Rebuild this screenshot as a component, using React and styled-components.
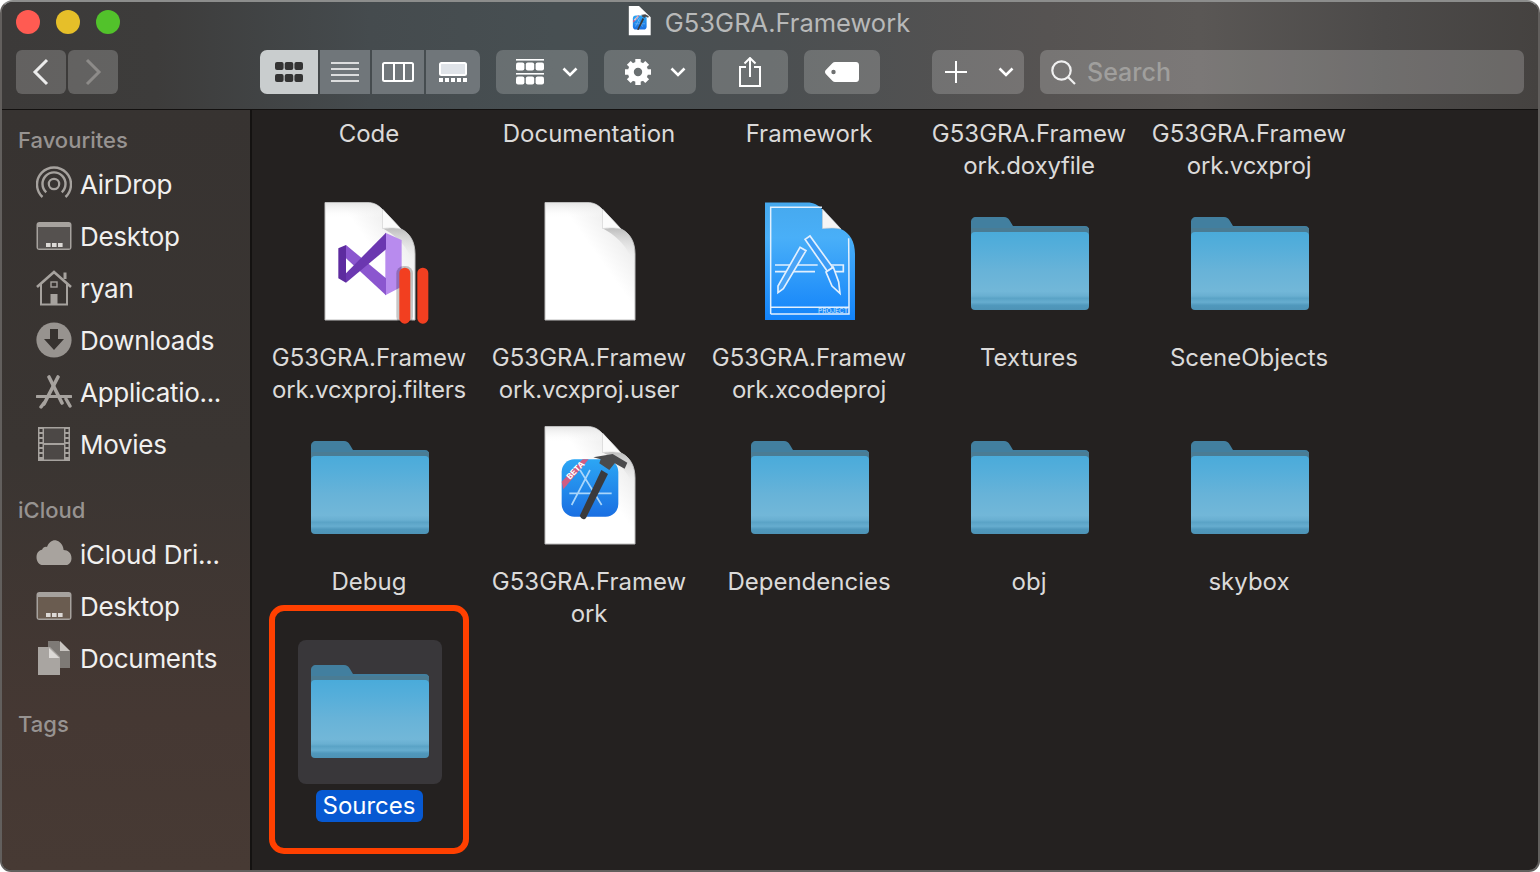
import styled, { createGlobalStyle } from "styled-components";

const GlobalStyle = createGlobalStyle`
  html, body {
    margin: 0;
    background: #fff;
    font-family: Inter, "Liberation Sans", sans-serif;
  }
  * { box-sizing: border-box; }
`;

const DOC_PATH = "M28 10.5H70C77 10.5 81 13 85 17L104 37C113 41 118 50 118 62V128H28Z";

const Doc = ({ children }) => (
  <svg width="144" height="144" viewBox="1 0 144 144">
    <defs>
      <linearGradient id="docShade" x1="1" y1="0" x2="0.55" y2="0.42">
        <stop offset="0" stopColor="#d2d2d2" />
        <stop offset="0.55" stopColor="#f0f0f0" />
        <stop offset="1" stopColor="#ffffff" />
      </linearGradient>
      <linearGradient id="docTop" x1="0" y1="0" x2="0" y2="1">
        <stop offset="0" stopColor="#e6e6e6" />
        <stop offset="1" stopColor="#ffffff" stopOpacity="0" />
      </linearGradient>
      <linearGradient id="docCurl" x1="0" y1="0" x2="0" y2="1">
        <stop offset="0" stopColor="#bdbdbd" />
        <stop offset="1" stopColor="#ffffff" stopOpacity="0" />
      </linearGradient>
    </defs>
    <path d={DOC_PATH} fill="url(#docShade)" stroke="#bdbdbd" strokeWidth="1" />
    <path d="M29 11H70C77 11 81 13 85 17V26H29Z" fill="url(#docTop)" />
    <path d="M86 36.5C98 35 104 37 104 37C113 41 117.5 50 117.5 62V74C112 56 100 44 86 36.5Z" fill="url(#docCurl)" />
    <path d="M85.5 17L104 37C98 35.5 91 36 85.5 36.5Z" fill="#fbfbfb" stroke="#cfcfcf" strokeWidth="0.6" />
    {children}
  </svg>
);

const VsDoc = () => (
  <Doc>
    <g transform="translate(13 -2) scale(0.3333)">
      <polygon points="226,128 275,150 275,290 226,316" fill="#b88bee" />
      <polygon points="108,165 228,265 228,316 108,205" fill="#8b56cf" />
      <polygon points="108,278 228,178 228,128 108,250" fill="#6b37b0" />
      <polygon points="85,175 108,165 108,278 85,265" fill="#5d2b9f" />
      <rect x="259" y="228" width="50" height="174" rx="22" fill="#000" opacity="0.22" />
      <rect x="268" y="233" width="33" height="168" rx="16" fill="#f23f20" />
      <rect x="322" y="233" width="33" height="168" rx="16" fill="#f23f20" />
    </g>
  </Doc>
);

const ProjectDoc = () => (
  <svg width="144" height="144" viewBox="1 0 144 144">
    <defs>
      <linearGradient id="projBlue" x1="0" y1="0" x2="0" y2="1">
        <stop offset="0" stopColor="#46a9ee" />
        <stop offset="0.3" stopColor="#49aff8" />
        <stop offset="1" stopColor="#1283fa" />
      </linearGradient>
    </defs>
    <path d={DOC_PATH} fill="url(#projBlue)" />
    <g transform="translate(13 -2) scale(0.3333)" fill="none" stroke="#e2f0fe" strokeWidth="4.5">
      <path d="M62 372V52H216M296 145C296 160 297 200 297 372H62M62 352H296" />
      <path d="M75 225H203M222 225H280V245H236M195 245H75Z" strokeWidth="5" />
      <path d="M150 172L168 182L100 296L84 308L84 288Z" fill="#49a4f7" strokeWidth="5" />
      <path d="M165 148L180 138L248 232L232 244Z" fill="#3d9df6" strokeWidth="5" />
      <path d="M228 246L250 232L266 276L270 310L246 288Z" fill="#2b92f7" strokeWidth="5" />
    </g>
    <path d="M85.5 17L104 37C98 35.5 91 36 85.5 36.5Z" fill="#f5f5f5" stroke="#cfcfcf" strokeWidth="0.6" />
    <text x="96" y="121" textAnchor="middle" fontSize="6.5" fill="#d8ecff" fontFamily="Inter, sans-serif">PROJECT</text>
  </svg>
);

const XcodeArt = () => (
  <g transform="translate(13 4) scale(0.3333)">
    <defs>
      <linearGradient id="xcBlue" x1="0" y1="0" x2="0" y2="1">
        <stop offset="0" stopColor="#2ca6f4" />
        <stop offset="1" stopColor="#1a6fe2" />
      </linearGradient>
    </defs>
    <rect x="95" y="118" width="170" height="172" rx="38" fill="url(#xcBlue)" />
    <path d="M95 185L158 118H176L100 208Z" fill="#cf5c83" />
    <text x="0" y="0" transform="translate(120 180) rotate(-46)" fontSize="25" fontWeight="700" fill="#fff" fontFamily="Inter, sans-serif">BETA</text>
    <g fill="none" stroke="#a9d6fb" strokeWidth="5">
      <path d="M180 150L125 255M150 150L215 255M118 220H245" />
    </g>
    <path d="M214 150L234 162L168 294C162 302 150 296 150 286Z" fill="#3a3a3c" />
    <path d="M190 112L248 102L292 128L284 146L254 130L238 150L208 130L212 118Z" fill="#4a4a4c" />
  </g>
);

const XcodeDoc = () => (
  <Doc>
    <XcodeArt />
  </Doc>
);

const TitleDoc = () => (
  <svg width="35" height="35" viewBox="0 0 144 144">
    <path d="M28 4H70L118 50V124H28Z" fill="#fff" />
    <XcodeArt />
  </svg>
);

const Folder = () => (
  <svg width="144" height="144" viewBox="1 0 144 144">
    <defs>
      <linearGradient id="folderFront" x1="0" y1="0" x2="0" y2="1">
        <stop offset="0" stopColor="#4aabda" />
        <stop offset="0.2" stopColor="#55aeda" />
        <stop offset="0.5" stopColor="#68b3d8" />
        <stop offset="0.76" stopColor="#72b7d8" />
        <stop offset="0.82" stopColor="#69afd1" />
        <stop offset="0.85" stopColor="#5aa3c6" />
        <stop offset="0.9" stopColor="#66adcf" />
        <stop offset="0.94" stopColor="#5098bc" />
        <stop offset="1" stopColor="#4e93b6" />
      </linearGradient>
    </defs>
    <path d="M14 30C14 27 16 25 19 25H47C50 25 51 26 53 29L56 34H128C131 34 132 36 132 38V60H14Z" fill="#427f9f" />
    <path d="M14 36H132V44H14Z" fill="#4a7c94" />
    <rect x="14" y="40" width="118" height="78" rx="4" fill="url(#folderFront)" />
  </svg>
);

const ICONS = { vs: VsDoc, doc: Doc, project: ProjectDoc, xcode: XcodeDoc, folder: Folder };

const Chevron = styled.svg.attrs({ width: 16, height: 10, viewBox: "0 0 16 10" })`
  fill: none;
  stroke: #fff;
  stroke-width: 2.6;
`;
const Down = () => (
  <Chevron>
    <path d="M1.5 1.5L8 8L14.5 1.5" />
  </Chevron>
);

const GridGlyph = () => (
  <svg width="28" height="20" viewBox="0 0 28 20" fill="#333">
    {[0, 1].map((r) =>
      [0, 1, 2].map((c) => <rect key={`${r}${c}`} x={c * 9.7} y={r * 12} width="8.6" height="8" rx="2" />)
    )}
  </svg>
);

const ListGlyph = () => (
  <svg width="28" height="20" viewBox="0 0 28 20" stroke="#fff" strokeWidth="1.6">
    <path d="M0 1H28M0 7H28M0 13H28M0 19H28" />
  </svg>
);

const ColumnGlyph = () => (
  <svg width="32" height="20" viewBox="0 0 32 20" fill="none" stroke="#fff" strokeWidth="2">
    <rect x="1" y="1" width="30" height="18" rx="1.5" />
    <path d="M12 1V19M22 1V19" />
  </svg>
);

const GalleryGlyph = () => (
  <svg width="28" height="20" viewBox="0 0 28 20">
    <rect x="1" y="1" width="26" height="12" rx="1.5" fill="#dfe3e8" stroke="#fff" strokeWidth="2" />
    {[0, 1, 2, 3, 4].map((i) => (
      <rect key={i} x={i * 6} y="16" width="4" height="4" fill="#fff" />
    ))}
  </svg>
);

const ArrangeGlyph = () => (
  <svg width="28" height="26" viewBox="0 0 28 26" fill="#fff">
    <rect y="0" width="28" height="1.6" />
    {[0, 1].map((r) =>
      [0, 1, 2].map((c) => <rect key={`${r}${c}`} x={c * 9.8} y={3.5 + r * 14} width="8.4" height="8" rx="2" />)
    )}
    <rect y="14" width="28" height="1.6" />
  </svg>
);

const GearGlyph = () => (
  <svg width="28" height="28" viewBox="0 0 28 28" fill="none" stroke="#fff">
    <circle cx="14" cy="14" r="7.2" strokeWidth="6" />
    {[0, 45, 90, 135, 180, 225, 270, 315].map((a) => (
      <path key={a} d="M14 6V1" strokeWidth="5.4" transform={`rotate(${a} 14 14)`} />
    ))}
  </svg>
);

const ShareGlyph = () => (
  <svg width="22" height="30" viewBox="0 0 22 30" fill="none" stroke="#fff" strokeWidth="2">
    <path d="M7 10H1V29H21V10H15" />
    <path d="M11 20V1.5M5.5 6.5L11 1L16.5 6.5" />
  </svg>
);

const TagGlyph = () => (
  <svg width="34" height="20" viewBox="0 0 34 20">
    <path
      fillRule="evenodd"
      fill="#fff"
      d="M10 0H31C32.7 0 34 1.3 34 3V17C34 18.7 32.7 20 31 20H10C9 20 8.3 19.7 7.6 19L0.8 12C-0.3 10.8 -0.3 9.2 0.8 8L7.6 1C8.3 0.3 9 0 10 0ZM8.5 7.8A2.2 2.2 0 1 0 8.5 12.2A2.2 2.2 0 1 0 8.5 7.8Z"
    />
  </svg>
);

const PlusGlyph = () => (
  <svg width="24" height="24" viewBox="0 0 24 24" stroke="#fff" strokeWidth="2">
    <path d="M12 1V23M1 12H23" />
  </svg>
);

const SearchGlyph = () => (
  <svg width="25" height="25" viewBox="0 0 25 25" fill="none" stroke="#f0f0f0" strokeWidth="2.2">
    <circle cx="10.5" cy="10.5" r="9.2" />
    <path d="M17 17L24 24" />
  </svg>
);

const SIDE = "#a6a29e";

const AirDropIcon = () => (
  <svg width="36" height="36" viewBox="0 0 36 36" fill="none" stroke={SIDE} strokeWidth="2.4">
    <path d="M6.5 31A17 17 0 1 1 29.5 31" />
    <path d="M10.2 26.3A11.5 11.5 0 1 1 25.8 26.3" />
    <circle cx="18" cy="18" r="5.2" strokeWidth="2.2" />
  </svg>
);

const DesktopIcon = ({ screen = "#55514f" }) => (
  <svg width="36" height="36" viewBox="0 0 36 36">
    <rect x="0.5" y="4" width="35" height="28" rx="3" fill={SIDE} />
    <rect x="2" y="9" width="32" height="21.5" fill={screen} />
    {[10, 16, 22].map((x) => (
      <rect key={x} x={x} y="25" width="4.6" height="4" fill="#dcd9d6" />
    ))}
  </svg>
);

const HomeIcon = () => (
  <svg width="36" height="36" viewBox="0 0 36 36" fill="none" stroke={SIDE} strokeWidth="2">
    <path d="M1 17L18 2L35 17" strokeWidth="2.6" />
    <path d="M29 9V2.5" strokeWidth="3" />
    <path d="M5 14V34.5H31V14" />
    <rect x="15" y="12" width="6" height="5" strokeWidth="1.4" />
    <rect x="14.5" y="24" width="7" height="10.5" fill={SIDE} stroke="none" />
  </svg>
);

const DownloadsIcon = () => (
  <svg width="36" height="36" viewBox="0 0 36 36">
    <circle cx="18" cy="18" r="17.6" fill="#97938f" />
    <path d="M14 7H22V17H28L18 28L8 17H14Z" fill="#36322f" />
  </svg>
);

const AppsIcon = () => (
  <svg width="36" height="34" viewBox="0 0 36 34" fill="none" stroke={SIDE} strokeLinecap="round">
    <path d="M13 2L26 28" strokeWidth="3.6" />
    <path d="M22 2L8 29" strokeWidth="3.6" />
    <path d="M1 21.5H35" strokeWidth="3" />
    <path d="M30 24L34 31" strokeWidth="3.4" />
    <path d="M5 32L8 28" strokeWidth="3.4" />
  </svg>
);

const MoviesIcon = () => (
  <svg width="36" height="36" viewBox="0 0 36 36">
    <rect x="2" y="1" width="32" height="34" fill={SIDE} />
    <rect x="8" y="2.5" width="20" height="14.5" fill="#4c4846" />
    <rect x="8" y="19" width="20" height="14.5" fill="#4c4846" />
    {[3, 8, 13, 18, 23, 28].map((y) => (
      <g key={y} fill="#3b3735">
        <rect x="3.5" y={y} width="3" height="3" />
        <rect x="29.5" y={y} width="3" height="3" />
      </g>
    ))}
  </svg>
);

const CloudIcon = () => (
  <svg width="36" height="36" viewBox="0 0 36 36">
    <path
      transform="translate(0 -9.75) scale(1 1.25)"
      d="M7 31C3 31 0.5 28 0.5 24.7C0.5 21.5 3 19 6 18.8C7 16.8 9.2 16 11 16.6C13 12.5 17 10.5 21 11.5C25 12.5 27.5 16 27.6 19C32 19 35.5 21.5 35.5 25.5C35.5 29 32.5 31 30 31Z"
      fill="#a8a39e"
    />
  </svg>
);

const DocumentsIcon = () => (
  <svg width="36" height="36" viewBox="0 0 36 36">
    <path d="M12 1H23L34 11V28H12Z" fill="#7e7a76" />
    <path d="M24 1L34 11H24Z" fill="#c9c5c1" />
    <path d="M2 7H14L24 17V35H2Z" fill="#a9a5a1" />
    <path d="M13 8L23.5 18H13Z" fill="#dcd9d6" />
  </svg>
);

const Window = styled.div`
  width: 1540px;
  height: 872px;
  display: flex;
  flex-direction: column;
  overflow: hidden;
  border: 2px solid #625f5d;
  border-top-color: #8c8d8c;
  border-radius: 13px 13px 11px 11px;
  background: #242120;
`;

const Toolbar = styled.header`
  flex: none;
  height: 108px;
  padding: 0 14px;
  border-bottom: 1px solid #131110;
  background: linear-gradient(
    90deg,
    #3c3a39 0%,
    #3d3c3b 10%,
    #454b4e 24%,
    #474f52 36%,
    #4b4f51 50%,
    #565352 68%,
    #5a5755 78%,
    #4c4a49 90%,
    #454240 100%
  );
`;

const TitleRow = styled.div`
  height: 40px;
  margin-bottom: 8px;
  display: flex;
  align-items: center;
`;

const Lights = styled.div`
  display: flex;
  gap: 16px;
`;

const Light = styled.span`
  width: 24px;
  height: 24px;
  border-radius: 50%;
  background: ${(p) => p.$color};
`;

const Title = styled.div`
  flex: 1;
  padding-right: 112px;
  display: flex;
  align-items: center;
  justify-content: center;
  gap: 8px;
  font-size: 25.5px;
  color: #b8b9b9;
`;

const ToolRow = styled.div`
  height: 44px;
  display: flex;
  gap: 16px;
`;

const Nav = styled.div`
  display: flex;
  gap: 2px;
  margin-right: ${(p) => p.$after || 0}px;
`;

const NavButton = styled.button`
  width: 50px;
  height: 44px;
  padding: 0;
  border: 0;
  border-radius: 6px;
  display: flex;
  align-items: center;
  justify-content: center;
  background: rgba(255, 255, 255, 0.2);
`;

const ViewGroup = styled.div`
  display: flex;
  gap: 2px;
  border-radius: 7px;
  overflow: hidden;
`;

const ViewButton = styled.div`
  width: ${(p) => p.$w}px;
  display: flex;
  align-items: center;
  justify-content: center;
  background: ${(p) => (p.$on ? "#c9cdce" : "#70767a")};
`;

const Tool = styled.div`
  width: ${(p) => p.$w}px;
  margin-left: ${(p) => p.$before || 0}px;
  padding: ${(p) => (p.$lead ? `0 10px 0 ${p.$lead}px` : "0")};
  border-radius: 7px;
  display: flex;
  align-items: center;
  justify-content: ${(p) => (p.$lead ? "space-between" : "center")};
  background: rgba(255, 255, 255, 0.19);
`;

const Search = styled.div`
  flex: 1;
  padding-left: 11px;
  border-radius: 7px;
  display: flex;
  align-items: center;
  gap: 11px;
  font-size: 25px;
  font-weight: 500;
  color: #a09f9d;
  background: rgba(255, 255, 255, 0.2);
`;

const Body = styled.div`
  flex: 1;
  min-height: 0;
  display: flex;
`;

const Sidebar = styled.aside`
  flex: none;
  width: 250px;
  padding: 14px 0 0 16px;
  border-right: 2px solid #141211;
  background: linear-gradient(180deg, #373331 0%, #3a3532 45%, #453833 80%, #473a34 100%);
`;

const Section = styled.section`
  margin-bottom: 23px;
`;

const SectionTitle = styled.h3`
  margin: 0 0 3px;
  font-size: 22px;
  line-height: 32px;
  font-weight: 500;
  color: #979391;
`;

const SideRow = styled.div`
  height: 52px;
  padding: 0 0 2px 18px;
  display: flex;
  align-items: center;
  gap: 8px;
  font-size: 26px;
  letter-spacing: -0.3px;
  color: #f1f0ef;
`;

const Main = styled.main`
  flex: 1;
  min-width: 0;
  padding: 2px 0 0 7px;
  display: grid;
  grid-template-columns: repeat(5, 220px);
  grid-template-rows: 80px repeat(3, 224px);
  align-content: start;
  overflow: hidden;
`;

const Cell = styled.div`
  position: relative;
  display: flex;
  flex-direction: column;
  align-items: center;
`;

const IconBox = styled.div`
  width: 144px;
  height: 144px;
  margin: 0 0 6px 2px;
  border-radius: 8px;
  background: ${(p) => (p.$selected ? "#39373a" : "transparent")};
`;

const Label = styled.div`
  padding: 0 7px;
  margin-top: ${(p) => (p.$noIcon ? "6px" : "0")};
  border-radius: 6px;
  font-size: 24px;
  line-height: 32px;
  text-align: center;
  white-space: nowrap;
  color: ${(p) => (p.$selected ? "#fff" : "#dbdad9")};
  background: ${(p) => (p.$selected ? "#0759d2" : "transparent")};

  div:nth-child(2) {
    letter-spacing: -0.2px;
  }
`;

const Callout = styled.div`
  position: absolute;
  left: 10px;
  top: -35px;
  width: 200px;
  height: 249px;
  border: 6px solid #ff4000;
  border-radius: 15px;
`;

const folder = (name) => ({ icon: "folder", lines: [name] });
const stem = "G53GRA.Framew";

const ITEMS = [
  { lines: ["Code"] },
  { lines: ["Documentation"] },
  { lines: ["Framework"] },
  { lines: [stem, "ork.doxyfile"] },
  { lines: [stem, "ork.vcxproj"] },
  { icon: "vs", lines: [stem, "ork.vcxproj.filters"] },
  { icon: "doc", lines: [stem, "ork.vcxproj.user"] },
  { icon: "project", lines: [stem, "ork.xcodeproj"] },
  folder("Textures"),
  folder("SceneObjects"),
  folder("Debug"),
  { icon: "xcode", lines: [stem, "ork"] },
  folder("Dependencies"),
  folder("obj"),
  folder("skybox"),
  { ...folder("Sources"), selected: true },
];

const SIDEBAR = [
  {
    title: "Favourites",
    rows: [
      [AirDropIcon, "AirDrop"],
      [DesktopIcon, "Desktop"],
      [HomeIcon, "ryan"],
      [DownloadsIcon, "Downloads"],
      [AppsIcon, "Applicatio..."],
      [MoviesIcon, "Movies"],
    ],
  },
  {
    title: "iCloud",
    rows: [
      [CloudIcon, "iCloud Dri..."],
      [() => <DesktopIcon screen="#6a5c50" />, "Desktop"],
      [DocumentsIcon, "Documents"],
    ],
  },
  { title: "Tags", rows: [] },
];

export default function App() {
  return (
    <Window>
      <GlobalStyle />
      <Toolbar>
        <TitleRow>
          <Lights>
            <Light $color="#ff5b52" />
            <Light $color="#e6bf29" />
            <Light $color="#52c22b" />
          </Lights>
          <Title>
            <TitleDoc />
            G53GRA.Framework
          </Title>
        </TitleRow>
        <ToolRow>
          <Nav $after={126}>
            <NavButton aria-label="Back">
              <svg width="50" height="44" viewBox="0 0 50 44" fill="none" stroke="#ececec" strokeWidth="3">
                <path d="M31 10L19 22L31 34" />
              </svg>
            </NavButton>
            <NavButton aria-label="Forward">
              <svg width="50" height="44" viewBox="0 0 50 44" fill="none" stroke="#8d8b89" strokeWidth="3">
                <path d="M19 10L31 22L19 34" />
              </svg>
            </NavButton>
          </Nav>
          <ViewGroup>
            <ViewButton $w={58} $on>
              <GridGlyph />
            </ViewButton>
            <ViewButton $w={50}>
              <ListGlyph />
            </ViewButton>
            <ViewButton $w={52}>
              <ColumnGlyph />
            </ViewButton>
            <ViewButton $w={54}>
              <GalleryGlyph />
            </ViewButton>
          </ViewGroup>
          <Tool $w={92} $lead={20}>
            <ArrangeGlyph />
            <Down />
          </Tool>
          <Tool $w={92} $lead={20}>
            <GearGlyph />
            <Down />
          </Tool>
          <Tool $w={76}>
            <ShareGlyph />
          </Tool>
          <Tool $w={76}>
            <TagGlyph />
          </Tool>
          <Tool $w={92} $lead={12} $before={36}>
            <PlusGlyph />
            <Down />
          </Tool>
          <Search>
            <SearchGlyph />
            Search
          </Search>
        </ToolRow>
      </Toolbar>
      <Body>
        <Sidebar>
          {SIDEBAR.map((section) => (
            <Section key={section.title}>
              <SectionTitle>{section.title}</SectionTitle>
              {section.rows.map(([Icon, name]) => (
                <SideRow key={name + section.title}>
                  <Icon />
                  {name}
                </SideRow>
              ))}
            </Section>
          ))}
        </Sidebar>
        <Main>
          {ITEMS.map((item, i) => {
            const Icon = ICONS[item.icon];
            return (
              <Cell key={i}>
                {Icon && (
                  <IconBox $selected={item.selected}>
                    <Icon />
                  </IconBox>
                )}
                <Label $noIcon={!Icon} $selected={item.selected}>
                  {item.lines.map((line) => (
                    <div key={line}>{line}</div>
                  ))}
                </Label>
                {item.selected && <Callout />}
              </Cell>
            );
          })}
        </Main>
      </Body>
    </Window>
  );
}
